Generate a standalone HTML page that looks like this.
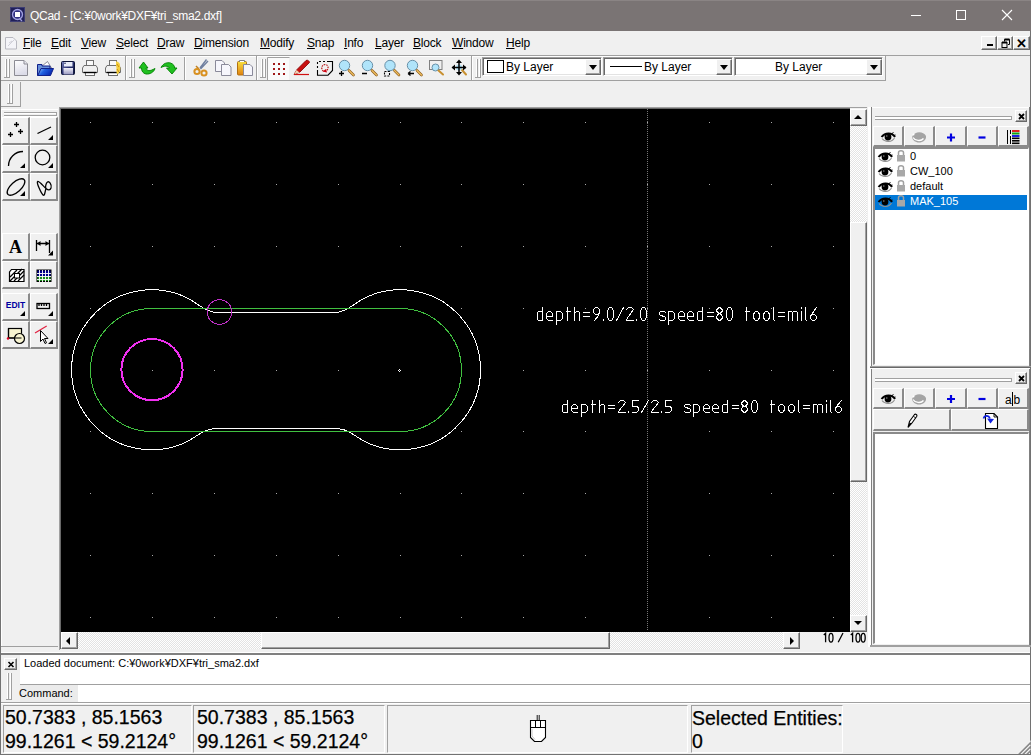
<!DOCTYPE html>
<html><head><meta charset="utf-8">
<style>
*{margin:0;padding:0;box-sizing:border-box}
html,body{width:1031px;height:755px;overflow:hidden;background:#f0f0f0;font-family:"Liberation Sans",sans-serif;font-size:12px;color:#000}
div,svg{position:absolute}
#title{left:0;top:0;width:1031px;height:31px;background:#7a7474;border-top:1px solid #8a8484}
#ttext{left:30px;top:9px;color:#fff;font-size:12px;letter-spacing:-0.3px;white-space:nowrap}
.menu{top:36px;font-size:12px;white-space:nowrap;letter-spacing:-0.2px}
.g{background:#a0a0a0}
.w{background:#fff}
.raised{background:#f0f0f0;border-top:1px solid #fff;border-left:1px solid #fff;border-right:1px solid #696969;border-bottom:1px solid #696969;box-shadow:inset -1px -1px 0 #a0a0a0}
.tb{background:#f0f0f0;border-top:1px solid #fff;border-left:1px solid #fff;border-right:1px solid #a0a0a0;border-bottom:1px solid #a0a0a0}
.chk{background-color:#fff;background-image:linear-gradient(45deg,#e3e3e3 25%,transparent 25%,transparent 75%,#e3e3e3 75%),linear-gradient(45deg,#e3e3e3 25%,transparent 25%,transparent 75%,#e3e3e3 75%);background-size:2px 2px;background-position:0 0,1px 1px}
.sunk{border-top:1px solid #a0a0a0;border-left:1px solid #a0a0a0;border-right:1px solid #fff;border-bottom:1px solid #fff}
.combo{background:#fff;border-top:1px solid #a0a0a0;border-left:1px solid #a0a0a0;border-right:1px solid #fff;border-bottom:1px solid #fff;box-shadow:inset 1px 1px 0 #696969, inset -1px -1px 0 #e3e3e3}
.hdl{width:3px;border-left:1px solid #fff;border-right:1px solid #a0a0a0;border-bottom:1px solid #a0a0a0;border-top:1px solid #fff}
.sep{width:2px;border-left:1px solid #a0a0a0;border-right:1px solid #fff}
.arr{width:0;height:0;border-left:4px solid transparent;border-right:4px solid transparent}
.txt{white-space:nowrap}
.tbtn{width:28px;height:28px;background:#f0f0f0;border-top:1px solid #fff;border-left:1px solid #fff;border-right:2px solid #8a8a8a;border-bottom:2px solid #8a8a8a}
.arrh{width:0;height:0;border-top:4px solid transparent;border-bottom:4px solid transparent}
.tbtn2{height:21px;background:#f0f0f0;border-top:1px solid #fff;border-left:1px solid #fff;border-right:2px solid #8a8a8a;border-bottom:2px solid #8a8a8a}
.lst{background:#fff;border-top:2px solid #8a8a8a;border-left:2px solid #8a8a8a;border-right:1px solid #fff;border-bottom:1px solid #fff}
.sb{border-top:1px solid #a0a0a0;border-left:1px solid #a0a0a0;border-right:1px solid #fff;border-bottom:1px solid #fff}
.stt{font-size:19.5px;line-height:20px;-webkit-text-stroke:0.25px #000}
</style></head><body>
<!-- window border -->
<div style="left:0;top:0;width:1px;height:755px;background:#727272"></div>
<div style="left:1030px;top:0;width:1px;height:755px;background:#727272"></div>
<!-- title bar -->
<div id="title"></div>
<div id="ttext">QCad - [C:¥0work¥DXF¥tri_sma2.dxf]</div>

<!-- title icon & window controls -->
<svg style="left:0;top:0" width="1031" height="56" viewBox="0 0 1031 56">
<rect x="10" y="7" width="15" height="15" fill="#20205a"/>
<rect x="10.5" y="7.5" width="14" height="14" fill="none" stroke="#5a5a8a" stroke-dasharray="1,1"/>
<circle cx="17.5" cy="14.5" r="5" fill="#303080" stroke="#a0a0e0" stroke-width="1.3"/>
<path d="M19.5,18.5L22,21" stroke="#a0a0e0" stroke-width="1.3"/>
<rect x="15" y="12" width="5" height="5" fill="#fff"/>
<path d="M911,15.5H921" stroke="#fff" stroke-width="1"/>
<rect x="956.5" y="10.5" width="9" height="9" fill="none" stroke="#fff" stroke-width="1"/>
<path d="M1002,10L1012,20M1012,10L1002,20" stroke="#fff" stroke-width="1.1"/>
<!-- menu doc icon -->
<path d="M5.5,37.5H13L16.5,41V49H5.5z" fill="#f4f4f8" stroke="#b8b8c0"/>
<path d="M8,46L14,40M9,43L12,41" stroke="#d0d0d8" stroke-width="1"/>
</svg>
<!-- MDI buttons -->
<div class="raised" style="left:981px;top:36px;width:16px;height:14px"><div style="left:5px;top:7px;width:6px;height:2px;background:#000"></div></div>
<div class="raised" style="left:997px;top:36px;width:16px;height:14px">
<svg style="left:2px;top:1px" width="11" height="11" viewBox="0 0 11 11"><path d="M4.5,1.5h5v5h-1.5M4.5,1.5v2" fill="none" stroke="#000" stroke-width="1"/><path d="M4.5,1.5h5" stroke="#000" stroke-width="2"/><rect x="2" y="4.5" width="5" height="5" fill="none" stroke="#000"/><path d="M2,4.5h5" stroke="#000" stroke-width="2"/></svg></div>
<div class="raised" style="left:1013px;top:36px;width:17px;height:14px"><div class="txt" style="left:2px;top:-1px;font-size:13px;font-weight:bold">&#x2715;</div></div>

<!-- menu -->
<div class="menu" style="left:23px"><u>F</u>ile</div>
<div class="menu" style="left:51px"><u>E</u>dit</div>
<div class="menu" style="left:81px"><u>V</u>iew</div>
<div class="menu" style="left:116px"><u>S</u>elect</div>
<div class="menu" style="left:157px"><u>D</u>raw</div>
<div class="menu" style="left:194px"><u>D</u>imension</div>
<div class="menu" style="left:260px"><u>M</u>odify</div>
<div class="menu" style="left:307px"><u>S</u>nap</div>
<div class="menu" style="left:344px"><u>I</u>nfo</div>
<div class="menu" style="left:375px"><u>L</u>ayer</div>
<div class="menu" style="left:413px"><u>B</u>lock</div>
<div class="menu" style="left:452px"><u>W</u>indow</div>
<div class="menu" style="left:506px"><u>H</u>elp</div>

<!-- toolbar area lines -->
<div class="g" style="left:1px;top:55px;width:1029px;height:1px"></div>
<div class="w" style="left:1px;top:56px;width:885px;height:1px"></div>
<div class="g" style="left:1px;top:80px;width:885px;height:1px"></div>
<div class="g" style="left:1px;top:106px;width:20px;height:1px"></div>


<!-- top toolbar row 1 -->
<svg style="left:0;top:0" width="1031" height="108" viewBox="0 0 1031 108">
<g fill="none" stroke-width="1">
<!-- toolbar separators -->
<path d="M125.5,56V80M256.5,56V80M471.5,56V80M885.5,56V80" stroke="#a0a0a0"/>
<path d="M126.5,56V80M257.5,56V80M472.5,56V80" stroke="#fff"/>
<!-- handles -->
<g stroke="#a0a0a0">
<path d="M6.5,59V77.5M9.5,59V77.5M4,77.5H10M131.5,59V77.5M134.5,59V77.5M129,77.5H135M262.5,59V77.5M265.5,59V77.5M260,77.5H266M477.5,59V77.5M480.5,59V77.5M475,77.5H481"/>
<path d="M184.5,57V80"/>
</g>
<g stroke="#fff">
<path d="M5.5,59V77M8.5,59V77M130.5,59V77M133.5,59V77M261.5,59V77M264.5,59V77M476.5,59V77M479.5,59V77M185.5,57V80"/>
</g>
</g>
<defs>
<linearGradient id="gdoc" x1="0" y1="0" x2="0.3" y2="1"><stop offset="0" stop-color="#ffffff"/><stop offset="1" stop-color="#dcdce8"/></linearGradient>
<linearGradient id="gfold" x1="0" y1="0" x2="1" y2="0.4"><stop offset="0" stop-color="#a8d8ff"/><stop offset="0.45" stop-color="#2060e0"/><stop offset="1" stop-color="#0828b0"/></linearGradient>
<linearGradient id="gsave" x1="0" y1="0" x2="1" y2="1"><stop offset="0" stop-color="#8088c0"/><stop offset="0.5" stop-color="#283070"/><stop offset="1" stop-color="#101840"/></linearGradient>
<linearGradient id="glab" x1="0" y1="0" x2="0" y2="1"><stop offset="0" stop-color="#f0f0f8"/><stop offset="1" stop-color="#9898c0"/></linearGradient>
<linearGradient id="gclip" x1="0" y1="0" x2="0" y2="1"><stop offset="0" stop-color="#f8e040"/><stop offset="1" stop-color="#e08010"/></linearGradient>
</defs>
<!-- new doc -->
<path d="M14.5,60.5H24L27.5,64V75.5H14.5z" fill="url(#gdoc)" stroke="#8c8c94"/>
<path d="M24,60.5V64H27.5" fill="#e8e8f0" stroke="#8c8c94"/>
<!-- open -->
<path d="M41.5,66.5L47.5,61.5L51.5,68z" fill="#fff" stroke="#707080" stroke-width="0.8"/>
<path d="M37.5,64.5H42V66H50V75.5H37.5z" fill="#6890d8" stroke="#10208a"/>
<path d="M37.8,75.5L41,68.5H53.5L50.5,75.5z" fill="url(#gfold)" stroke="#10208a"/>
<!-- save -->
<rect x="61.5" y="61.5" width="13" height="13" rx="1" fill="url(#gsave)" stroke="#0c1438"/>
<rect x="64" y="62" width="8.5" height="4.5" fill="#e8ecf8"/>
<rect x="63.5" y="68" width="9.5" height="6.5" fill="url(#glab)"/>
<circle cx="65" cy="63.2" r="0.8" fill="#20285a"/>
<!-- print -->
<g stroke="#707070" stroke-width="1">
<rect x="86.5" y="60.5" width="7" height="5" fill="#fafafa"/>
<path d="M84,65.5H96L97.5,68V72.5H82.5V68z" fill="#f0f0f0"/>
<rect x="85.5" y="72.5" width="9" height="3" fill="#fff"/>
</g>
<path d="M83.5,72.5H96.5" stroke="#000" stroke-width="1.4"/>
<!-- print preview -->
<g stroke="#707070" stroke-width="1">
<rect x="109.5" y="60.5" width="7" height="5" fill="#fafafa"/>
<path d="M107,65.5H119L120.5,68V72.5H105.5V68z" fill="#f0f0f0"/>
<rect x="108.5" y="72.5" width="9" height="3" fill="#fff"/>
</g>
<path d="M106.5,72.5H119.5" stroke="#000" stroke-width="1.4"/>
<path d="M116,61.5C119,61.5 120.5,64 120,66.5C121,69 120,72.5 117.5,74.5C116,73 116.5,70 116.5,68C116,66 116,64 116,61.5z" fill="#f4d040"/><path d="M117,64L119,67M117,69L119,72" stroke="#d09010" stroke-width="1"/>
<!-- undo -->
<path d="M139,68L143.5,62L148,68H146C146.5,70.5 149,71.5 153,69.5L155,68.5C154,72 150,74.5 146,74C143,73.5 141.5,71 141.5,68z" fill="#20c020" stroke="#008000" stroke-width="0.9"/>
<!-- redo -->
<path d="M161,67.5C163,63.5 167,62 170.5,63C173.5,64 175,66.5 174.5,68H177L172,74L166.5,68H169.5C169,66.5 166,65 161,67.5z" fill="#20c020" stroke="#008000" stroke-width="0.9"/>
<!-- cut -->
<path d="M200,68L206.5,59.5M200.5,69L208,61" stroke="#7080a0" stroke-width="1.4"/>
<path d="M199,69L196,66" stroke="#c08020" stroke-width="1.5"/>
<circle cx="197" cy="71.5" r="2.6" fill="none" stroke="#d89020" stroke-width="2"/>
<circle cx="204" cy="73" r="2.6" fill="none" stroke="#d89020" stroke-width="2"/>
<!-- copy -->
<path d="M215.5,60.5H222L224.5,63V71.5H215.5z" fill="#f6f6fc" stroke="#8a8a9a"/>
<path d="M221.5,64.5H228.5L231,67V75.5H221.5z" fill="#f6f6fc" stroke="#8a8a9a"/>
<!-- paste -->
<rect x="237.5" y="61.5" width="9" height="13.5" rx="1" fill="url(#gclip)" stroke="#b07010"/>
<path d="M239.5,62V60.5H244.5V62" fill="#fff" stroke="#808080"/>
<path d="M243.5,64.5H250L252.5,67V75.5H243.5z" fill="#f6f6fc" stroke="#8a8a9a"/>
<!-- grid (checked) -->
<path d="M267.5,80V57.5H289.5" fill="none" stroke="#a0a0a0"/>
<rect x="268" y="58" width="21" height="22" fill="#fafafa"/>
<g fill="#a01818">
<rect x="273" y="63" width="2" height="2"/><rect x="278" y="63" width="2" height="2"/><rect x="283" y="63" width="2" height="2"/>
<rect x="273" y="68" width="2" height="2"/><rect x="278" y="68" width="2" height="2"/><rect x="283" y="68" width="2" height="2"/>
<rect x="273" y="73" width="2" height="2"/><rect x="278" y="73" width="2" height="2"/><rect x="283" y="73" width="2" height="2"/>
</g>
<!-- pencil -->
<path d="M294,74.5L297,69.5L306,60.5C307.5,59.5 309.5,61 309.5,62.5L300,72z" fill="#c81010" stroke="#800000" stroke-width="0.8"/>
<path d="M294,74.5L296.5,70L299.5,72.5z" fill="#f0d0b0"/>
<path d="M294,74.5H309" stroke="#d01010" stroke-width="1.2"/>
<!-- redraw -->
<path d="M317.5,72V61.5H329" fill="none" stroke="#000" stroke-width="1.1" stroke-dasharray="2,2"/>
<path d="M329,61.5H332.5V70.5L328,75.2H317.5V72" fill="none" stroke="#000" stroke-width="1.1"/>
<path d="M323.5,71C321,70 321,65 325,64.5C328.5,64.5 329,69 326.5,70.5" fill="none" stroke="#b81010" stroke-width="1.2" stroke-dasharray="1.5,1"/>
<path d="M322.5,71.5L326,69L327,72.5z" fill="#d00010"/>
<!-- zooms -->
<g stroke="#6890a8" stroke-width="1" fill="#b0e4fa">
<circle cx="344.5" cy="65.5" r="5.2"/>
<circle cx="367.5" cy="65.5" r="5.2"/>
<circle cx="390" cy="65.5" r="5.2"/>
<circle cx="412.5" cy="65.5" r="5.2"/>
</g>
<g stroke="#906020" stroke-width="2.6" stroke-linecap="round">
<path d="M349,70.5L353.5,75M372,70.5L376.5,75M394.5,70.5L399,75M417,70.5L421.5,75"/>
</g>
<g stroke="#f0c060" stroke-width="1.2" stroke-linecap="round">
<path d="M349,70.5L353.5,75M372,70.5L376.5,75M394.5,70.5L399,75M417,70.5L421.5,75"/>
</g>
<path d="M339,73.5H344M341.5,71V76M362,73.5H367" stroke="#000" stroke-width="1.3"/>
<path d="M384.5,71.5h5v4.5h-5z" fill="none" stroke="#000" stroke-width="1.1" stroke-dasharray="2,1.2"/>
<path d="M408,73.5H414M408,73.5L410.5,71.5M408,73.5L410.5,75.5" stroke="#000" stroke-width="1.3" fill="none"/>
<!-- auto zoom -->
<rect x="429.5" y="60.5" width="12.5" height="9" fill="none" stroke="#808080"/>
<circle cx="435.5" cy="67.5" r="3.5" fill="#b0e4fa" stroke="#6890a8"/>
<path d="M438.5,70.5L443,74.5" stroke="#c89030" stroke-width="2" stroke-linecap="round"/>
<!-- pan -->
<path d="M462,70L466,74.5" stroke="#c89030" stroke-width="2" stroke-linecap="round"/>
<circle cx="459" cy="67.5" r="3" fill="#b0e4fa"/>
<path d="M459,61V74M452.5,67.5H466" stroke="#000" stroke-width="1.5"/>
<path d="M456,63L459,59.5L462,63zM456,72L459,75.5L462,72zM455,64.5L451.5,67.5L455,70.5zM463,64.5L466.5,67.5L463,70.5z" fill="#000"/>
</svg>

<!-- combos -->
<div class="combo" style="left:482px;top:57px;width:120px;height:19px"></div>
<div class="combo" style="left:603px;top:57px;width:130px;height:19px"></div>
<div class="combo" style="left:734px;top:57px;width:149px;height:19px"></div>
<div class="raised dbtn" style="left:585px;top:59px;width:16px;height:16px"><div class="arr" style="left:3px;top:5px;border-top:5px solid #000"></div></div>
<div class="raised dbtn" style="left:716px;top:59px;width:16px;height:16px"><div class="arr" style="left:3px;top:5px;border-top:5px solid #000"></div></div>
<div class="raised dbtn" style="left:866px;top:59px;width:16px;height:16px"><div class="arr" style="left:3px;top:5px;border-top:5px solid #000"></div></div>
<div style="left:487px;top:60px;width:17px;height:13px;border:1px solid #000;background:#fff"></div>
<div class="txt" style="left:506px;top:60px;font-size:12px">By Layer</div>
<div style="left:610px;top:66px;width:32px;height:1px;background:#000"></div>
<div class="txt" style="left:644px;top:60px;font-size:12px">By Layer</div>
<div class="txt" style="left:775px;top:60px;font-size:12px">By Layer</div>

<!-- row 2 small toolbar -->
<div class="g" style="left:20px;top:82px;width:1px;height:24px"></div>
<svg style="left:0;top:80px" width="24" height="28" viewBox="0 80 24 28">
<path d="M9.5,84V103.5M12.5,84V103.5M7,103.5H13" stroke="#a0a0a0" fill="none"/>
<path d="M8.5,84V103M11.5,84V103" stroke="#fff" fill="none"/>
</svg>

<!-- canvas frame -->
<div class="g" style="left:59px;top:107px;width:808px;height:1px"></div>
<div class="g" style="left:59px;top:107px;width:1px;height:543px"></div>
<div style="left:60px;top:108px;width:790px;height:1px;background:#696969"></div>
<div style="left:60px;top:108px;width:1px;height:541px;background:#696969"></div>
<div style="left:61px;top:109px;width:789px;height:523px;background:#000"></div>


<!-- left toolbox -->
<div class="w" style="left:1px;top:109px;width:57px;height:1px"></div>
<div class="w" style="left:1px;top:109px;width:1px;height:537px"></div>
<div class="g" style="left:1px;top:646px;width:57px;height:1px"></div>
<div class="g" style="left:4px;top:112px;width:53px;height:1px"></div>
<div class="w" style="left:4px;top:113px;width:53px;height:1px"></div>
<div class="g" style="left:4px;top:115px;width:53px;height:1px"></div>
<div class="w" style="left:4px;top:116px;width:53px;height:1px"></div>
<div class="g" style="left:56px;top:112px;width:1px;height:4px"></div>
<div class="tbtn" style="left:2px;top:117px"></div>
<div class="tbtn" style="left:30px;top:117px"></div>
<div class="tbtn" style="left:2px;top:145px"></div>
<div class="tbtn" style="left:30px;top:145px"></div>
<div class="tbtn" style="left:2px;top:173px"></div>
<div class="tbtn" style="left:30px;top:173px"></div>
<div class="tbtn" style="left:2px;top:233px"></div>
<div class="tbtn" style="left:30px;top:233px"></div>
<div class="tbtn" style="left:2px;top:261px"></div>
<div class="tbtn" style="left:30px;top:261px"></div>
<div class="tbtn" style="left:2px;top:293px"></div>
<div class="tbtn" style="left:30px;top:293px"></div>
<div class="tbtn" style="left:2px;top:321px"></div>
<div class="tbtn" style="left:30px;top:321px"></div>
<svg style="left:0;top:0" width="60" height="360" viewBox="0 0 60 360">
<g stroke="#000" stroke-width="1.3" fill="none">
<path d="M14,124.5h5M16.5,122v5M18,131.5h5M20.5,129v5M8,134.5h5M10.5,132v5"/>
<path d="M37.5,133.5L51,127"/>
<path d="M8.5,166A14.5,14.5 0 0 1 23,151.5"/>
<circle cx="42.5" cy="157.5" r="7.3"/>
<ellipse cx="16" cy="187" rx="11" ry="5" transform="rotate(-42 16 187)"/>
<path d="M37.5,181.5C36.5,183 41,193 43,195C45,196.5 45,191 46,188.5M37.5,181.5C39,180.5 44,187 46,188.5C48,190 50,191 51,188C52,184 49,181 47.5,182C46,183 45,187 46,188.5"/>
<path d="M36.5,240v11M49.5,240v13M37,243.5H49"/>
</g><path d="M37,243.5L40.5,241V246zM49,243.5L45.5,241V246z" fill="#000"/><g stroke="#000" stroke-width="1.3" fill="none">
<rect x="37" y="303.5" width="12.5" height="5"/>
<path d="M39,304v2M41.5,304v2M44,304v2M46.5,304v2"/>
</g>
<g fill="#000">
<path d="M53,135v5h-5z M25,163.3v4.7h-5z M53,163v5h-5z M25,191v5h-5z M53,250.5v5h-5z M25,311v5h-5z M53,311v5h-5z M53,339v5h-5z"/>
</g>
<text x="15.5" y="253" font-family="Liberation Serif" font-weight="bold" font-size="18" text-anchor="middle">A</text>
<!-- hatch -->
<g>
<path d="M11.5,269.5H24V281.5H9.5V272z" fill="#fff" stroke="#000" stroke-width="1.2"/>
<path d="M10,277L17,270M10,281L22,269M14,281L24,271M18,281L24,275" stroke="#000" stroke-width="1.3"/>
<rect x="14.5" y="273.5" width="5" height="4.5" fill="#fff" stroke="#000" stroke-width="1"/>
</g>
<!-- image grid -->
<g>
<rect x="36.5" y="269.5" width="15" height="12.5" fill="#000"/>
<rect x="37.5" y="270.5" width="13" height="5.5" fill="#00008b"/>
<rect x="37.5" y="276" width="13" height="5" fill="#1a8a1a"/>
<path d="M37,273.5h14M37,276.5h14M37,279.5h14M39.5,270v12M42.5,270v12M45.5,270v12M48.5,270v12" stroke="#fff" stroke-width="0.9"/>
</g>
<text x="15.5" y="308" font-family="Liberation Sans" font-weight="bold" font-size="8.5" fill="#0000a0" text-anchor="middle">EDIT</text>
<!-- select -->
<rect x="8.5" y="328.5" width="13" height="9.5" fill="#f8f4d0" stroke="#000" stroke-width="1.2"/>
<circle cx="19.5" cy="338.5" r="5" fill="#f8f4d0" stroke="#000" stroke-width="1.2"/>
<path d="M8.5,328.5v9.5h13" fill="none" stroke="#000" stroke-width="1.2"/>
<circle cx="8" cy="338.5" r="1.2" fill="#e00020"/>
<!-- cursor -->
<path d="M35,333L46.7,326" stroke="#e02040" stroke-width="1.2"/>
<path d="M40.5,330.5V341.5L43,339L45,343.5L46.5,342.8L44.5,338.5H48z" fill="#fff" stroke="#000" stroke-width="1"/>
</svg>

<!-- CANVAS_START -->
<svg style="left:61px;top:109px" width="789" height="522" viewBox="61 109 789 522">
<g fill="#a8a8a8"><rect x="90" y="122" width="1" height="1"/><rect x="90" y="184" width="1" height="1"/><rect x="90" y="246" width="1" height="1"/><rect x="90" y="308" width="1" height="1"/><rect x="90" y="370" width="1" height="1"/><rect x="90" y="431" width="1" height="1"/><rect x="90" y="493" width="1" height="1"/><rect x="90" y="555" width="1" height="1"/><rect x="90" y="617" width="1" height="1"/><rect x="152" y="122" width="1" height="1"/><rect x="152" y="184" width="1" height="1"/><rect x="152" y="246" width="1" height="1"/><rect x="152" y="308" width="1" height="1"/><rect x="152" y="370" width="1" height="1"/><rect x="152" y="431" width="1" height="1"/><rect x="152" y="493" width="1" height="1"/><rect x="152" y="555" width="1" height="1"/><rect x="152" y="617" width="1" height="1"/><rect x="214" y="122" width="1" height="1"/><rect x="214" y="184" width="1" height="1"/><rect x="214" y="246" width="1" height="1"/><rect x="214" y="308" width="1" height="1"/><rect x="214" y="370" width="1" height="1"/><rect x="214" y="431" width="1" height="1"/><rect x="214" y="493" width="1" height="1"/><rect x="214" y="555" width="1" height="1"/><rect x="214" y="617" width="1" height="1"/><rect x="276" y="122" width="1" height="1"/><rect x="276" y="184" width="1" height="1"/><rect x="276" y="246" width="1" height="1"/><rect x="276" y="308" width="1" height="1"/><rect x="276" y="370" width="1" height="1"/><rect x="276" y="431" width="1" height="1"/><rect x="276" y="493" width="1" height="1"/><rect x="276" y="555" width="1" height="1"/><rect x="276" y="617" width="1" height="1"/><rect x="338" y="122" width="1" height="1"/><rect x="338" y="184" width="1" height="1"/><rect x="338" y="246" width="1" height="1"/><rect x="338" y="308" width="1" height="1"/><rect x="338" y="370" width="1" height="1"/><rect x="338" y="431" width="1" height="1"/><rect x="338" y="493" width="1" height="1"/><rect x="338" y="555" width="1" height="1"/><rect x="338" y="617" width="1" height="1"/><rect x="400" y="122" width="1" height="1"/><rect x="400" y="184" width="1" height="1"/><rect x="400" y="246" width="1" height="1"/><rect x="400" y="308" width="1" height="1"/><rect x="400" y="370" width="1" height="1"/><rect x="400" y="431" width="1" height="1"/><rect x="400" y="493" width="1" height="1"/><rect x="400" y="555" width="1" height="1"/><rect x="400" y="617" width="1" height="1"/><rect x="461" y="122" width="1" height="1"/><rect x="461" y="184" width="1" height="1"/><rect x="461" y="246" width="1" height="1"/><rect x="461" y="308" width="1" height="1"/><rect x="461" y="370" width="1" height="1"/><rect x="461" y="431" width="1" height="1"/><rect x="461" y="493" width="1" height="1"/><rect x="461" y="555" width="1" height="1"/><rect x="461" y="617" width="1" height="1"/><rect x="523" y="122" width="1" height="1"/><rect x="523" y="184" width="1" height="1"/><rect x="523" y="246" width="1" height="1"/><rect x="523" y="308" width="1" height="1"/><rect x="523" y="370" width="1" height="1"/><rect x="523" y="431" width="1" height="1"/><rect x="523" y="493" width="1" height="1"/><rect x="523" y="555" width="1" height="1"/><rect x="523" y="617" width="1" height="1"/><rect x="585" y="122" width="1" height="1"/><rect x="585" y="184" width="1" height="1"/><rect x="585" y="246" width="1" height="1"/><rect x="585" y="308" width="1" height="1"/><rect x="585" y="370" width="1" height="1"/><rect x="585" y="431" width="1" height="1"/><rect x="585" y="493" width="1" height="1"/><rect x="585" y="555" width="1" height="1"/><rect x="585" y="617" width="1" height="1"/><rect x="647" y="122" width="1" height="1"/><rect x="647" y="184" width="1" height="1"/><rect x="647" y="246" width="1" height="1"/><rect x="647" y="308" width="1" height="1"/><rect x="647" y="370" width="1" height="1"/><rect x="647" y="431" width="1" height="1"/><rect x="647" y="493" width="1" height="1"/><rect x="647" y="555" width="1" height="1"/><rect x="647" y="617" width="1" height="1"/><rect x="709" y="122" width="1" height="1"/><rect x="709" y="184" width="1" height="1"/><rect x="709" y="246" width="1" height="1"/><rect x="709" y="308" width="1" height="1"/><rect x="709" y="370" width="1" height="1"/><rect x="709" y="431" width="1" height="1"/><rect x="709" y="493" width="1" height="1"/><rect x="709" y="555" width="1" height="1"/><rect x="709" y="617" width="1" height="1"/><rect x="771" y="122" width="1" height="1"/><rect x="771" y="184" width="1" height="1"/><rect x="771" y="246" width="1" height="1"/><rect x="771" y="308" width="1" height="1"/><rect x="771" y="370" width="1" height="1"/><rect x="771" y="431" width="1" height="1"/><rect x="771" y="493" width="1" height="1"/><rect x="771" y="555" width="1" height="1"/><rect x="771" y="617" width="1" height="1"/><rect x="833" y="122" width="1" height="1"/><rect x="833" y="184" width="1" height="1"/><rect x="833" y="246" width="1" height="1"/><rect x="833" y="308" width="1" height="1"/><rect x="833" y="370" width="1" height="1"/><rect x="833" y="431" width="1" height="1"/><rect x="833" y="493" width="1" height="1"/><rect x="833" y="555" width="1" height="1"/><rect x="833" y="617" width="1" height="1"/></g>
<path d="M647.5,109V631" stroke="#787878" stroke-width="1" stroke-dasharray="1,1" shape-rendering="crispEdges"/>
<g fill="none" stroke-width="1" shape-rendering="crispEdges">
<path d="M217.10000000000002,312.5 L335.0,312.5 C342.0,312.5 348.3039247338628,308.720746958432 354.0,304.651996958432 A80.0,80.0 0 1 1 354.0,434.848003041568 C348.3039247338628,430.779253041568 342.0,428.5 335.0,428.5 L217.10000000000002,428.5 C210.10000000000002,428.5 203.79607526613722,430.779253041568 198.10000000000002,434.848003041568 A80.0,80.0 0 1 1 198.10000000000002,304.651996958432 C203.79607526613722,308.720746958432 210.10000000000002,312.5 217.10000000000002,312.5" stroke="#fff"/>
<path d="M152.0,308.5 L400.0,308.5 A61.5,61.5 0 0 1 400.0,431.5 L152.0,431.5 A61.5,61.5 0 0 1 152.0,308.5z" stroke="#40c040"/>
<circle cx="219.5" cy="312" r="12.3" stroke="#c030c8"/>
<circle cx="152" cy="369.6" r="30.6" stroke="#f030f0" stroke-width="2"/>
<path d="M542.5,307.5 L542.5,320.5 M542.5,311.5 L538.5,311.5 L537.5,312.5 L537.5,319.5 L538.5,320.5 L542.5,320.5 M546.5,316.5 L552.5,316.5 L552.5,313.5 L550.5,311.5 L548.5,311.5 L546.5,313.5 L546.5,318.5 L548.5,320.5 L552.5,320.5 M556.5,311.5 L556.5,324.5 M556.5,311.5 L560.5,311.5 L562.5,313.5 L562.5,318.5 L560.5,320.5 L556.5,320.5 M567.5,307.5 L567.5,320.5 M566.5,311.5 L570.5,311.5 M574.5,307.5 L574.5,320.5 M574.5,313.5 L576.5,311.5 L578.5,311.5 L579.5,312.5 L579.5,320.5 M583.5,312.5 L589.5,312.5 M583.5,316.5 L589.5,316.5 M595.5,307.5 L597.5,307.5 L599.5,309.5 L599.5,313.5 L597.5,314.5 L595.5,314.5 L593.5,312.5 L593.5,309.5 L595.5,307.5 M598.5,315.5 L594.5,320.5 M603.5,319.5 L603.5,320.5 M609.5,307.5 L611.5,307.5 L612.5,308.5 L613.5,311.5 L613.5,316.5 L612.5,319.5 L611.5,320.5 L609.5,320.5 L608.5,319.5 L607.5,316.5 L607.5,311.5 L608.5,308.5 L609.5,307.5 M616.5,320.5 L623.5,307.5 M626.5,309.5 L628.5,307.5 L631.5,307.5 L633.5,309.5 L626.5,319.5 L626.5,320.5 L633.5,320.5 M636.5,319.5 L636.5,320.5 M642.5,307.5 L644.5,307.5 L645.5,308.5 L646.5,311.5 L646.5,316.5 L645.5,319.5 L644.5,320.5 L642.5,320.5 L641.5,319.5 L640.5,316.5 L640.5,311.5 L641.5,308.5 L642.5,307.5 M665.5,312.5 L664.5,311.5 L660.5,311.5 L659.5,312.5 L659.5,314.5 L660.5,315.5 L664.5,316.5 L665.5,317.5 L665.5,319.5 L664.5,320.5 L660.5,320.5 L659.5,319.5 M668.5,311.5 L668.5,324.5 M668.5,311.5 L672.5,311.5 L674.5,313.5 L674.5,318.5 L672.5,320.5 L668.5,320.5 M678.5,316.5 L684.5,316.5 L684.5,313.5 L682.5,311.5 L680.5,311.5 L678.5,313.5 L678.5,318.5 L680.5,320.5 L684.5,320.5 M687.5,316.5 L693.5,316.5 L693.5,313.5 L691.5,311.5 L689.5,311.5 L687.5,313.5 L687.5,318.5 L689.5,320.5 L693.5,320.5 M702.5,307.5 L702.5,320.5 M702.5,311.5 L698.5,311.5 L697.5,312.5 L697.5,319.5 L698.5,320.5 L702.5,320.5 M707.5,312.5 L713.5,312.5 M707.5,316.5 L713.5,316.5 M719.5,313.5 L717.5,312.5 L716.5,310.5 L717.5,308.5 L719.5,307.5 L721.5,308.5 L722.5,310.5 L721.5,312.5 L719.5,313.5 L717.5,314.5 L716.5,317.5 L717.5,319.5 L719.5,320.5 L721.5,319.5 L722.5,317.5 L721.5,314.5 L719.5,313.5 M728.5,307.5 L730.5,307.5 L731.5,308.5 L732.5,311.5 L732.5,316.5 L731.5,319.5 L730.5,320.5 L728.5,320.5 L727.5,319.5 L726.5,316.5 L726.5,311.5 L727.5,308.5 L728.5,307.5 M746.5,307.5 L746.5,320.5 M745.5,311.5 L749.5,311.5 M755.5,311.5 L757.5,311.5 L758.5,312.5 L759.5,314.5 L759.5,317.5 L758.5,319.5 L757.5,320.5 L755.5,320.5 L754.5,319.5 L753.5,317.5 L753.5,314.5 L754.5,312.5 L755.5,311.5 M765.5,311.5 L767.5,311.5 L768.5,312.5 L769.5,314.5 L769.5,317.5 L768.5,319.5 L767.5,320.5 L765.5,320.5 L764.5,319.5 L763.5,317.5 L763.5,314.5 L764.5,312.5 L765.5,311.5 M773.5,307.5 L773.5,319.5 L774.5,320.5 M778.5,312.5 L784.5,312.5 M778.5,316.5 L784.5,316.5 M788.5,311.5 L788.5,320.5 M788.5,312.5 L789.5,311.5 L791.5,311.5 L792.5,312.5 L792.5,320.5 M792.5,312.5 L793.5,311.5 L796.5,311.5 L797.5,312.5 L797.5,320.5 M801.5,311.5 L801.5,320.5 M801.5,307.5 L801.5,308.5 M805.5,307.5 L805.5,319.5 L806.5,320.5 M816.5,307.5 L811.5,314.5 L810.5,316.5 L810.5,318.5 L812.5,320.5 L814.5,320.5 L816.5,318.5 L816.5,316.5 L814.5,314.5 L812.5,314.5 L810.5,316.5 M567.5,400.5 L567.5,412.5 M567.5,404.5 L563.5,404.5 L562.5,405.5 L562.5,411.5 L563.5,412.5 L567.5,412.5 M571.5,408.5 L577.5,408.5 L577.5,406.5 L575.5,404.5 L573.5,404.5 L571.5,406.5 L571.5,410.5 L573.5,412.5 L577.5,412.5 M581.5,404.5 L581.5,416.5 M581.5,404.5 L585.5,404.5 L587.5,406.5 L587.5,410.5 L585.5,412.5 L581.5,412.5 M592.5,400.5 L592.5,412.5 M591.5,404.5 L595.5,404.5 M599.5,400.5 L599.5,412.5 M599.5,406.5 L601.5,404.5 L603.5,404.5 L604.5,405.5 L604.5,412.5 M608.5,405.5 L614.5,405.5 M608.5,408.5 L614.5,408.5 M618.5,402.5 L620.5,400.5 L623.5,400.5 L625.5,402.5 L618.5,411.5 L618.5,412.5 L625.5,412.5 M628.5,411.5 L628.5,412.5 M638.5,400.5 L632.5,400.5 L632.5,406.5 L636.5,406.5 L638.5,407.5 L638.5,410.5 L636.5,412.5 L632.5,412.5 M641.5,412.5 L648.5,400.5 M651.5,402.5 L653.5,400.5 L656.5,400.5 L658.5,402.5 L651.5,411.5 L651.5,412.5 L658.5,412.5 M661.5,411.5 L661.5,412.5 M671.5,400.5 L665.5,400.5 L665.5,406.5 L669.5,406.5 L671.5,407.5 L671.5,410.5 L669.5,412.5 L665.5,412.5 M690.5,405.5 L689.5,404.5 L685.5,404.5 L684.5,405.5 L684.5,406.5 L685.5,407.5 L689.5,408.5 L690.5,409.5 L690.5,411.5 L689.5,412.5 L685.5,412.5 L684.5,411.5 M693.5,404.5 L693.5,416.5 M693.5,404.5 L697.5,404.5 L699.5,406.5 L699.5,410.5 L697.5,412.5 L693.5,412.5 M703.5,408.5 L709.5,408.5 L709.5,406.5 L707.5,404.5 L705.5,404.5 L703.5,406.5 L703.5,410.5 L705.5,412.5 L709.5,412.5 M712.5,408.5 L718.5,408.5 L718.5,406.5 L716.5,404.5 L714.5,404.5 L712.5,406.5 L712.5,410.5 L714.5,412.5 L718.5,412.5 M727.5,400.5 L727.5,412.5 M727.5,404.5 L723.5,404.5 L722.5,405.5 L722.5,411.5 L723.5,412.5 L727.5,412.5 M732.5,405.5 L738.5,405.5 M732.5,408.5 L738.5,408.5 M744.5,406.5 L742.5,405.5 L741.5,403.5 L742.5,401.5 L744.5,400.5 L746.5,401.5 L747.5,403.5 L746.5,405.5 L744.5,406.5 L742.5,406.5 L741.5,409.5 L742.5,411.5 L744.5,412.5 L746.5,411.5 L747.5,409.5 L746.5,406.5 L744.5,406.5 M753.5,400.5 L755.5,400.5 L756.5,401.5 L757.5,404.5 L757.5,408.5 L756.5,411.5 L755.5,412.5 L753.5,412.5 L752.5,411.5 L751.5,408.5 L751.5,404.5 L752.5,401.5 L753.5,400.5 M771.5,400.5 L771.5,412.5 M770.5,404.5 L774.5,404.5 M780.5,404.5 L782.5,404.5 L783.5,405.5 L784.5,406.5 L784.5,409.5 L783.5,411.5 L782.5,412.5 L780.5,412.5 L779.5,411.5 L778.5,409.5 L778.5,406.5 L779.5,405.5 L780.5,404.5 M790.5,404.5 L792.5,404.5 L793.5,405.5 L794.5,406.5 L794.5,409.5 L793.5,411.5 L792.5,412.5 L790.5,412.5 L789.5,411.5 L788.5,409.5 L788.5,406.5 L789.5,405.5 L790.5,404.5 M798.5,400.5 L798.5,411.5 L799.5,412.5 M803.5,405.5 L809.5,405.5 M803.5,408.5 L809.5,408.5 M813.5,404.5 L813.5,412.5 M813.5,405.5 L814.5,404.5 L816.5,404.5 L817.5,405.5 L817.5,412.5 M817.5,405.5 L818.5,404.5 L821.5,404.5 L822.5,405.5 L822.5,412.5 M826.5,404.5 L826.5,412.5 M826.5,400.5 L826.5,401.5 M830.5,400.5 L830.5,411.5 L831.5,412.5 M841.5,400.5 L836.5,406.5 L835.5,408.5 L835.5,410.5 L837.5,412.5 L839.5,412.5 L841.5,410.5 L841.5,408.5 L839.5,406.5 L837.5,406.5 L835.5,408.5" stroke="#fff" stroke-linejoin="miter" stroke-linecap="square"/>
</g>
<path d="M399,369h1v1h-1zM398,370h1v1h-1zM400,370h1v1h-1zM399,371h1v1h-1z" fill="#fff"/>
</svg>
<!-- CANVAS_END -->
<!-- scrollbars -->
<div class="chk" style="left:850px;top:126px;width:17px;height:489px"></div>
<div class="chk" style="left:78px;top:632px;width:705px;height:17px"></div>
<div class="raised" style="left:850px;top:109px;width:17px;height:17px"><div class="arr" style="left:3px;top:5px;border-bottom:4px solid #000"></div></div>
<div class="raised" style="left:850px;top:222px;width:17px;height:260px"></div>
<div class="raised" style="left:850px;top:615px;width:17px;height:17px"><div class="arr" style="left:3px;top:5px;border-top:4px solid #000"></div></div>
<div class="raised" style="left:61px;top:632px;width:17px;height:17px"><div class="arrh" style="left:4px;top:4px;border-right:4px solid #000"></div></div>
<div class="raised" style="left:261px;top:632px;width:349px;height:17px"></div>
<div class="raised" style="left:783px;top:632px;width:17px;height:17px"><div class="arrh" style="left:6px;top:4px;border-left:4px solid #000"></div></div>
<svg style="left:815px;top:628px" width="55" height="20" viewBox="815 628 55 20"><g fill="none" stroke="#000" stroke-width="1.3">
<path d="M823.8,635L825.6,633.2V642.2M850.8,635L852.6,633.2V642.2M838.2,642.2L843,633"/>
<ellipse cx="831" cy="637.7" rx="2" ry="4.4"/><ellipse cx="858" cy="637.7" rx="2" ry="4.4"/><ellipse cx="863.2" cy="637.7" rx="2" ry="4.4"/>
</g></svg>

<!-- right dock 1 (layers) -->
<div class="w" style="left:871px;top:107px;width:159px;height:1px"></div>
<div style="left:1029px;top:107px;width:1px;height:540px;background:#808080"></div>
<div style="left:871px;top:107px;width:1px;height:540px;background:#808080"></div>
<div style="left:868px;top:107px;width:3px;height:540px;background:#fff"></div>
<div class="g" style="left:875px;top:116px;width:137px;height:1px"></div>
<div class="w" style="left:875px;top:117px;width:136px;height:2px"></div>
<div class="g" style="left:875px;top:119px;width:137px;height:1px"></div>
<div class="g" style="left:1011px;top:116px;width:1px;height:4px"></div>
<div class="raised" style="left:1015px;top:110px;width:12px;height:12px"><svg style="left:1px;top:1px" width="9" height="9" viewBox="0 0 9 9"><path d="M2,2L7,7M7,2L2,7" stroke="#000" stroke-width="1.8"/></svg></div>
<div class="tbtn2" style="left:873px;top:126px;width:31px"></div>
<div class="tbtn2" style="left:904px;top:126px;width:31px"></div>
<div class="tbtn2" style="left:935px;top:126px;width:32px"></div>
<div class="tbtn2" style="left:967px;top:126px;width:31px"></div>
<div class="tbtn2" style="left:998px;top:126px;width:31px"></div>
<div class="lst" style="left:873px;top:147px;width:156px;height:218px"></div>
<div style="left:875px;top:195px;width:152px;height:15px;background:#0078d7"></div>
<div class="txt" style="left:910px;top:150px;font-size:11px">0</div>
<div class="txt" style="left:910px;top:165px;font-size:11px">CW_100</div>
<div class="txt" style="left:910px;top:180px;font-size:11px">default</div>
<div class="txt" style="left:910px;top:195px;font-size:11px;color:#fff">MAK_105</div>

<div style="left:870px;top:367px;width:161px;height:1px;background:#696969"></div>
<div style="left:870px;top:366px;width:161px;height:1px;background:#a0a0a0"></div>
<div class="w" style="left:871px;top:368px;width:159px;height:1px"></div>
<div class="g" style="left:875px;top:378px;width:137px;height:1px"></div>
<div class="w" style="left:875px;top:379px;width:136px;height:2px"></div>
<div class="g" style="left:875px;top:381px;width:137px;height:1px"></div>
<div class="g" style="left:1011px;top:378px;width:1px;height:4px"></div>
<div class="raised" style="left:1015px;top:372px;width:12px;height:12px"><svg style="left:1px;top:1px" width="9" height="9" viewBox="0 0 9 9"><path d="M2,2L7,7M7,2L2,7" stroke="#000" stroke-width="1.8"/></svg></div>
<div class="tbtn2" style="left:873px;top:388px;width:31px"></div>
<div class="tbtn2" style="left:904px;top:388px;width:31px"></div>
<div class="tbtn2" style="left:935px;top:388px;width:32px"></div>
<div class="tbtn2" style="left:967px;top:388px;width:31px"></div>
<div class="tbtn2" style="left:998px;top:388px;width:31px"></div>
<div class="tbtn2" style="left:873px;top:409px;width:78px;height:22px"></div>
<div class="tbtn2" style="left:951px;top:409px;width:78px;height:22px"></div>
<div class="lst" style="left:873px;top:432px;width:156px;height:212px"></div>
<div class="g" style="left:870px;top:645px;width:161px;height:2px"></div>

<!-- dock icons -->
<svg style="left:860px;top:120px" width="171" height="330" viewBox="860 120 171 330">
<defs>
<g id="eye"><path d="M-6,1.5C-3,5.5 4,5.5 6.5,1" fill="none" stroke="#909090" stroke-width="1.1"/><path d="M-6.5,0C-3,-4.5 4,-5 7,0" fill="none" stroke="#000" stroke-width="2"/><circle cx="0" cy="0" r="3.4" fill="#000"/><circle cx="-1.2" cy="-1" r="0.8" fill="#888"/><path d="M4,-3.5L5.5,-4.5M6,-1.5L7.5,-2" stroke="#000" stroke-width="1"/></g>
<g id="geye"><path d="M-7,0C-5,-5.5 4,-6.5 7,-1C7.5,3 4,5.5 0,5.5C-4,5.5 -6.5,3 -7,0z" fill="#a4a4a4"/><path d="M-6,0.5C-4,4 2,4.5 4.5,1.5" fill="none" stroke="#fff" stroke-width="1.3"/><circle cx="-5.5" cy="-2.5" r="1" fill="#fff"/></g>
<g id="lock"><path d="M-2.5,-2V-4.5C-2.5,-7 2.5,-7 2.5,-4.5V-2" fill="none" stroke="#a0a0a0" stroke-width="1.5"/><rect x="-4" y="-2" width="8" height="6.5" fill="#a8a8a8"/></g>
</defs>
<use href="#eye" x="888" y="137"/>
<use href="#geye" x="919" y="137"/>
<path d="M947,137.5H955M951,133.5V141.5" stroke="#0000e0" stroke-width="2.2"/>
<path d="M978.5,137.5H985.5" stroke="#0000e0" stroke-width="2.2"/>
<path d="M1007.5,130V144M1010.5,130V134M1010.5,136V144" stroke="#000" stroke-width="1"/>
<rect x="1012" y="130" width="7.5" height="2" fill="#e02020"/>
<rect x="1012" y="132.5" width="7.5" height="2" fill="#10a010"/>
<rect x="1012" y="135" width="7.5" height="2" fill="#2020e0"/>
<rect x="1012" y="137.5" width="7.5" height="1.6" fill="#000"/>
<rect x="1012" y="140" width="7.5" height="1.6" fill="#000"/>
<rect x="1012" y="142.5" width="7.5" height="1.6" fill="#000"/>
<use href="#eye" x="885" y="157"/><use href="#lock" x="901" y="157"/>
<use href="#eye" x="885" y="172"/><use href="#lock" x="901" y="172"/>
<use href="#eye" x="885" y="187"/><use href="#lock" x="901" y="187"/>
<use href="#eye" x="885" y="202"/><use href="#lock" x="901" y="202"/>
<use href="#eye" x="888" y="399"/>
<use href="#geye" x="919" y="399"/>
<path d="M947,399H955M951,395V403" stroke="#0000e0" stroke-width="2.2"/>
<path d="M978.5,399H985.5" stroke="#0000e0" stroke-width="2.2"/>
<text x="1005" y="404" font-family="Liberation Sans" font-size="12">a</text><path d="M1012.5,392V406" stroke="#000"/><text x="1013.5" y="404" font-family="Liberation Sans" font-size="12">b</text>
<path d="M908,427.5L909.5,421.5L914.5,414.5C915.5,413.5 917.5,414.8 916.8,416.2L911.8,423.2z" fill="#fff" stroke="#000" stroke-width="1.1"/>
<path d="M908,427.5L909.6,422.5L911.5,423.6z" fill="#000"/>
<path d="M913.3,416.2L915.8,418" stroke="#000" stroke-width="0.9"/>
<path d="M985.5,413.5H994L997.5,417V428.5H985.5z" fill="#fff" stroke="#000" stroke-width="1.1"/>
<path d="M994,413.5V417H997.5" fill="none" stroke="#000" stroke-width="0.9"/>
<path d="M983.5,418.5C984.5,415 988.5,415 990,418.5" fill="none" stroke="#1020e0" stroke-width="1.6"/>
<path d="M987,418.5L994,419L990.5,423.5z" fill="#1020e0"/>
</svg>

<!-- bottom separator -->
<div class="w" style="left:1px;top:652px;width:1029px;height:1px"></div>
<div style="left:1px;top:653px;width:1029px;height:2px;background:#808080"></div>

<!-- command dock -->
<div class="raised" style="left:4px;top:658px;width:13px;height:12px"><svg style="left:1px;top:1px" width="10" height="9" viewBox="0 0 10 9"><path d="M2.5,2L7.5,7M7.5,2L2.5,7" stroke="#000" stroke-width="1.6"/></svg></div>
<svg style="left:0;top:670px" width="20" height="32" viewBox="0 670 20 32">
<path d="M8.5,673V699.5M11.5,673V699.5M6,699.5H12" stroke="#a0a0a0" fill="none"/>
<path d="M7.5,673V699M10.5,673V699" stroke="#fff" fill="none"/>
</svg>
<div class="w" style="left:20px;top:655px;width:1010px;height:29px"></div>
<div class="g" style="left:20px;top:684px;width:1010px;height:1px"></div>
<div class="w" style="left:78px;top:685px;width:952px;height:17px"></div>
<div style="left:20px;top:685px;width:58px;height:17px;background:#ebebeb"></div>
<div class="txt" style="left:24px;top:657px;font-size:11px">Loaded document: C:¥0work¥DXF¥tri_sma2.dxf</div>
<div class="txt" style="left:19px;top:687px;font-size:11px">Command:</div>
<div class="g" style="left:1px;top:702px;width:1029px;height:1px"></div>
<div class="w" style="left:1px;top:703px;width:1029px;height:1px"></div>

<!-- status bar -->
<div class="sb" style="left:3px;top:705px;width:189px;height:48px"></div>
<div class="sb" style="left:193px;top:705px;width:192px;height:48px"></div>
<div class="sb" style="left:387px;top:705px;width:301px;height:48px"></div>
<div class="sb" style="left:691px;top:705px;width:152px;height:48px"></div>
<div class="txt stt" style="left:5px;top:707px">50.7383 , 85.1563</div>
<div class="txt stt" style="left:5px;top:731px">99.1261 &lt; 59.2124°</div>
<div class="txt stt" style="left:197px;top:707px">50.7383 , 85.1563</div>
<div class="txt stt" style="left:197px;top:731px">99.1261 &lt; 59.2124°</div>
<div class="txt stt" style="left:692px;top:708px">Selected Entities:</div>
<div class="txt stt" style="left:692px;top:731px">0</div>
<svg style="left:525px;top:712px" width="26" height="32" viewBox="525 712 26 32">
<path d="M530.5,720.5H545.5V737.5L541.5,741.5H534.5L530.5,737.5z" fill="#fff" stroke="#000" stroke-width="1.1"/>
<path d="M530.5,727.5H545.5M535.5,720.5V727.5M540.5,720.5V727.5" stroke="#000" stroke-width="1"/>
<path d="M537.2,715V720.5M539.2,715V720.5" stroke="#000" stroke-width="0.9"/>
<path d="M532,729V736L535,739.5" stroke="#c8c8c8" fill="none"/>
</svg>
<svg style="left:1014px;top:739px" width="17" height="16" viewBox="1014 739 17 16">
<path d="M1018,755L1031,742M1022,755L1031,746M1026,755L1031,750" stroke="#8a8a8a" stroke-width="2"/>
<path d="M1016.5,755L1031,740.5M1020.5,755L1031,744.5M1024.5,755L1031,748.5" stroke="#fff" stroke-width="1"/>
</svg>
<div style="left:0;top:754px;width:1031px;height:1px;background:#727272"></div>
</body></html>
